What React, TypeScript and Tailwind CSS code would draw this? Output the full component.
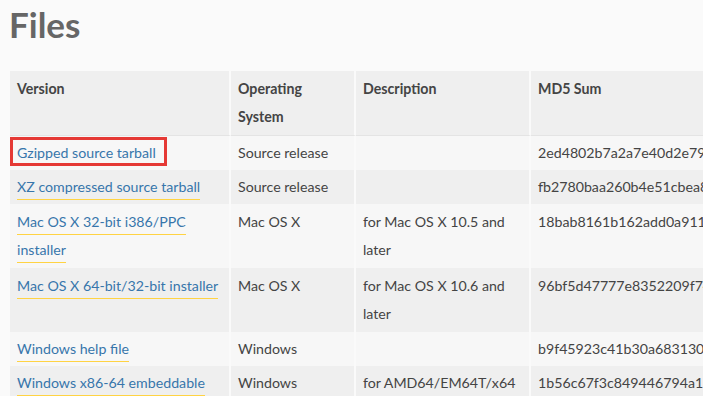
import React from 'react';

type Row = {
  version: string[];
  os: string;
  desc: string[];
  md5: string;
  boxed?: boolean;
};

const rows: Row[] = [
  { version: ['Gzipped source tarball'], os: 'Source release', desc: [], md5: '2ed4802b7a2a7e40d2e797', boxed: true },
  { version: ['XZ compressed source tarball'], os: 'Source release', desc: [], md5: 'fb2780baa260b4e51cbea8' },
  { version: ['Mac OS X 32-bit i386/PPC', 'installer'], os: 'Mac OS X', desc: ['for Mac OS X 10.5 and', 'later'], md5: '18bab8161b162add0a9116' },
  { version: ['Mac OS X 64-bit/32-bit installer'], os: 'Mac OS X', desc: ['for Mac OS X 10.6 and', 'later'], md5: '96bf5d47777e8352209f743' },
  { version: ['Windows help file'], os: 'Windows', desc: [], md5: 'b9f45923c41b30a683130fc' },
  { version: ['Windows x86-64 embeddable'], os: 'Windows', desc: ['for AMD64/EM64T/x64'], md5: '1b56c67f3c849446794a151' },
];

const LinkLines: React.FC<{ lines: string[] }> = ({ lines }) => (
  <>
    {lines.map((l, i) => (
      <div key={i} className="whitespace-nowrap">
        <a className="text-[#3776ab] border-b border-[#ffd343] pb-[4px]">{l}</a>
      </div>
    ))}
  </>
);

const App: React.FC = () => {
  return (
    <div
      className="w-[703px] h-[396px] overflow-hidden bg-[#fafafa] text-[#444]"
      style={{ fontFamily: 'Lato, "Liberation Sans", sans-serif' }}
    >
      <h1 className="pl-[9px] pt-[4px] text-[35px] leading-[40px] font-bold text-[#666]">Files</h1>
      <table className="ml-[10px] mt-[27px] w-[760px] table-fixed border-separate border-spacing-0 text-[14.2px] leading-[28px]">
        <colgroup>
          <col className="w-[221px]" />
          <col className="w-[125px]" />
          <col className="w-[175px]" />
          <col />
        </colgroup>
        <thead>
          <tr className="bg-[#efefef] text-left font-bold text-[#444] align-top">
            <th className="px-[7px] pt-[4px] pb-[4px] border-r-2 border-[#fafafa] border-b border-b-[#e4e4e4]">Version</th>
            <th className="px-[7px] pt-[4px] pb-[4px] border-r-2 border-[#fafafa] border-b border-b-[#e4e4e4]">Operating System</th>
            <th className="px-[7px] pt-[4px] pb-[4px] border-r-2 border-[#fafafa] border-b border-b-[#e4e4e4]">Description</th>
            <th className="px-[7px] pt-[4px] pb-[4px] border-b border-b-[#e4e4e4]">MD5 Sum</th>
          </tr>
        </thead>
        <tbody>
          {rows.map((r, i) => {
            const multi = r.version.length > 1 || r.desc.length > 1;
            const pad = multi ? 'py-[4px]' : 'py-[3px]';
            return (
              <tr key={i} className={`align-top ${i % 2 === 0 ? 'bg-[#f7f7f7]' : 'bg-[#efefef]'}`}>
                <td className={`relative px-[7px] ${pad} border-r-2 border-[#fafafa]`}>
                  {r.boxed && (
                    <div className="absolute left-0 top-[1px] w-[157px] h-[29px] border-[3px] border-[#e53935]" />
                  )}
                  <LinkLines lines={r.version} />
                </td>
                <td className={`px-[7px] ${pad} border-r-2 border-[#fafafa] whitespace-nowrap`}>{r.os}</td>
                <td className={`px-[7px] ${pad} border-r-2 border-[#fafafa]`}>
                  {r.desc.map((d, j) => (
                    <div key={j} className="whitespace-nowrap">{d}</div>
                  ))}
                </td>
                <td className={`px-[7px] ${pad} whitespace-nowrap`}>{r.md5}</td>
              </tr>
            );
          })}
        </tbody>
      </table>
    </div>
  );
};

export default App;
